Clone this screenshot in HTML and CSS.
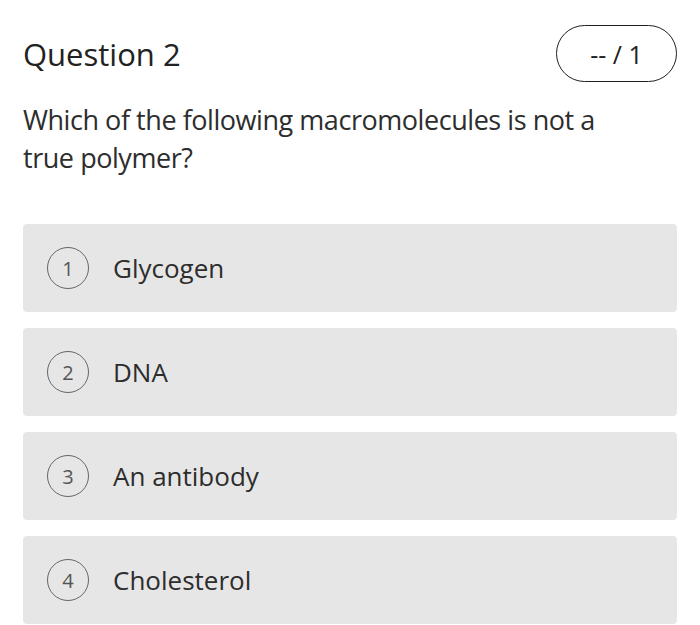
FILE: index.html
```html
<!DOCTYPE html>
<html lang="en">
<head>
  <meta charset="UTF-8" />
  <title>Question 2</title>
  <link rel="stylesheet" href="styles.css">
</head>
<body>
  <div class="question">
    <div class="question-head">
      <h2>Question 2</h2>
      <div class="score">-- / 1</div>
    </div>

    <p class="prompt">Which of the following macromolecules is not a true polymer?</p>

    <ul class="choices">
      <li class="choice"><span class="num">1</span><span class="label">Glycogen</span></li>
      <li class="choice"><span class="num">2</span><span class="label">DNA</span></li>
      <li class="choice"><span class="num">3</span><span class="label">An antibody</span></li>
      <li class="choice"><span class="num">4</span><span class="label">Cholesterol</span></li>
    </ul>
  </div>
</body>
</html>
```

FILE: styles.css
```css
body {
  margin: 0;
  font-family: 'Open Sans', sans-serif;
  background: #fff;
  color: #2d2d2d;
}

.question {
  padding: 25px 23px 0 23px;
}

.question-head {
  display: flex;
  justify-content: space-between;
  align-items: center;
}

.question-head h2 {
  margin: 0;
  font-size: 31px;
  font-weight: 500;
  color: #222;
}

.score {
  width: 121px;
  height: 57px;
  box-sizing: border-box;
  border: 1.5px solid #222;
  border-radius: 29px;
  display: flex;
  align-items: center;
  justify-content: center;
  font-size: 25px;
  color: #222;
}

.prompt {
  margin: 19px 0 0 0;
  max-width: 600px;
  font-size: 27px;
  line-height: 38px;
  letter-spacing: -0.45px;
  color: #2d2d2d;
}

.choices {
  list-style: none;
  margin: 47px 0 0 0;
  padding: 0;
  display: flex;
  flex-direction: column;
  gap: 16px;
}

.choice {
  display: flex;
  align-items: center;
  height: 88px;
  padding-left: 24px;
  background: #e6e6e6;
  border-radius: 4px;
}

.num {
  width: 42px;
  height: 42px;
  box-sizing: border-box;
  border: 1.5px solid #666;
  border-radius: 50%;
  display: flex;
  align-items: center;
  justify-content: center;
  font-size: 20px;
  color: #555;
}

.label {
  margin-left: 24px;
  font-size: 26px;
  color: #2d2d2d;
}
```
